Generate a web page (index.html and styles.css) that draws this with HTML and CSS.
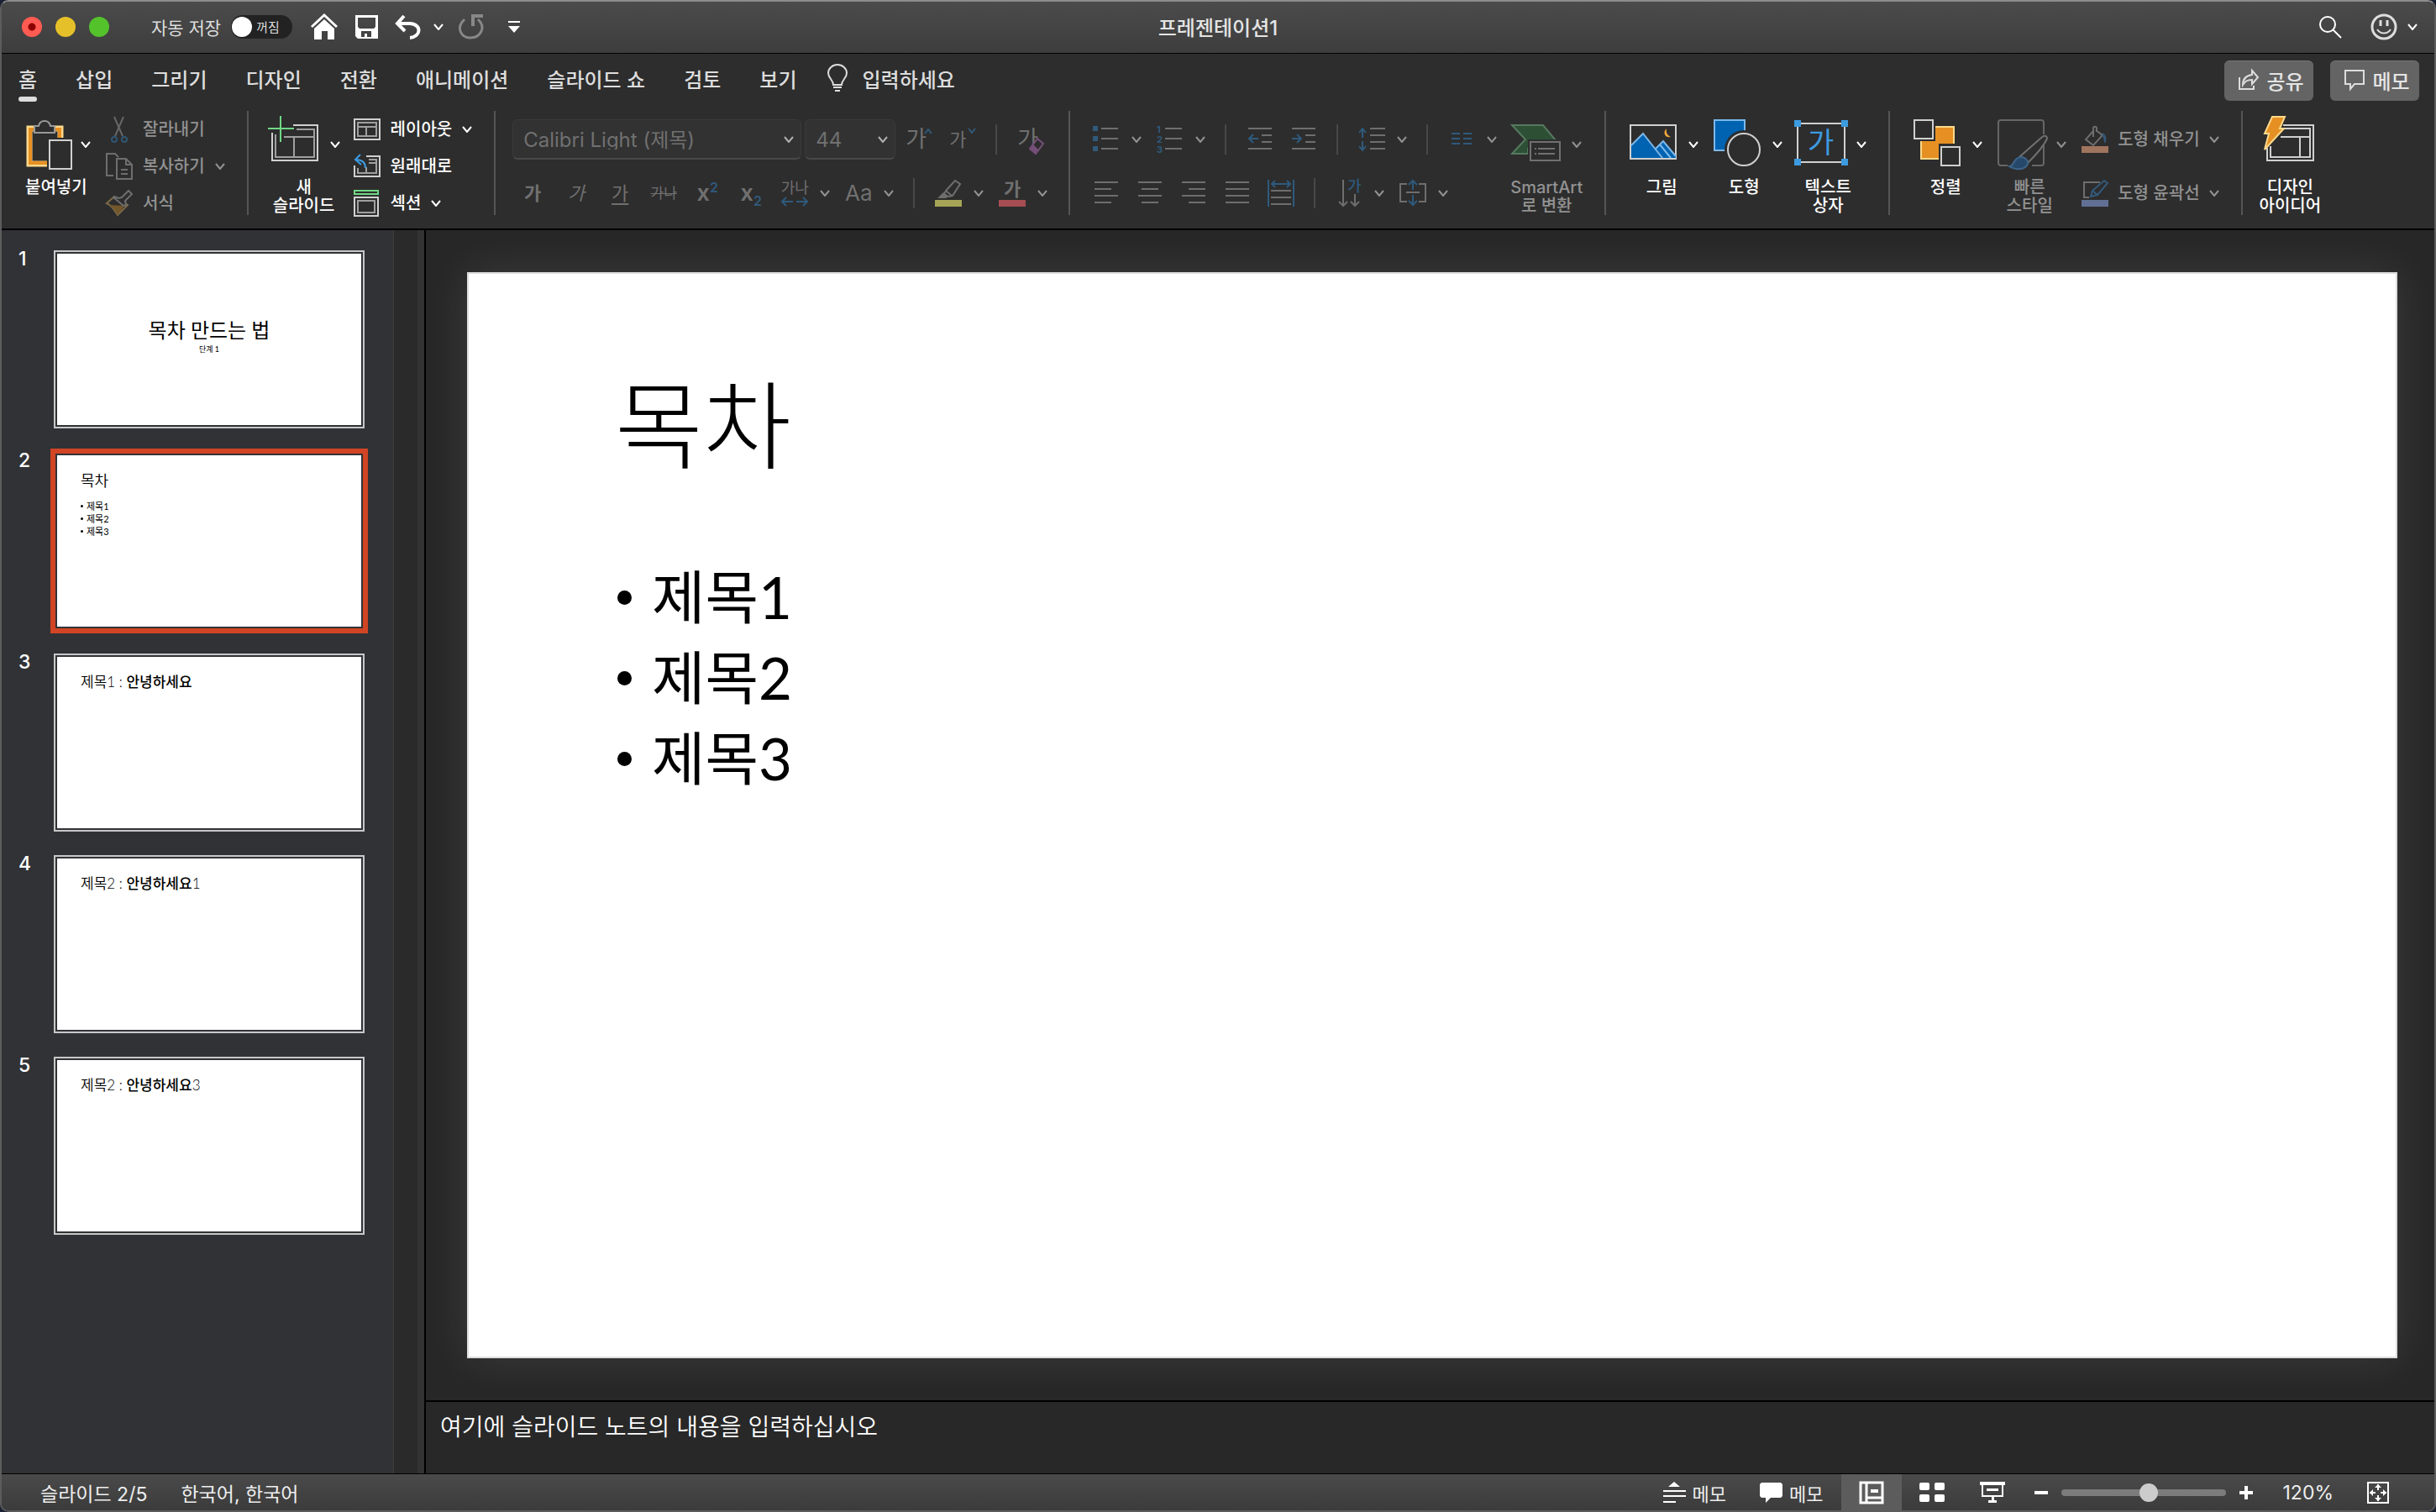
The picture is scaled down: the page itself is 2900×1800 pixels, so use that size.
FILE: index.html
```html
<!DOCTYPE html>
<html lang="ko">
<head>
    <meta charset="utf-8">
    <title>프레젠테이션1</title>
    <link rel="stylesheet" href="styles.css">
</head>
<body>
<svg class="defs" aria-hidden="true">
    <symbol id="chev" viewBox="0 0 12 8"><path d="M1 1l5 6 5-6" fill="none" stroke="currentColor" stroke-width="2"/></symbol>
</svg>
<div class="window">
    <header class="titlebar">
        <div class="title-left">
            <div class="lights">
                <button class="light red" aria-label="닫기"></button>
                <button class="light yellow" aria-label="최소화"></button>
                <button class="light green" aria-label="확대"></button>
            </div>
            <label class="autosave" for="autosave">자동 저장</label>
            <label class="toggle"><input type="checkbox" id="autosave"><span>꺼짐</span></label>
            <div class="quick">
                <button aria-label="홈"><svg width="32" height="32" viewBox="0 0 32 32"><path d="M1 16L16 2l15 14" fill="none" stroke="#fff" stroke-width="3"/><path d="M4 18L16 7l12 11v13h-8V21h-7v10H4z" fill="#fff"/></svg></button>
                <button aria-label="저장"><svg width="28" height="30" viewBox="0 0 28 30"><path fill-rule="evenodd" fill="#fff" d="M1 1h27v28H4l-3-3zM4 4v11l2 2h17l2-2V4zM8 20v7h4v-4h3v4h5v-7z"/></svg></button>
                <button aria-label="실행 취소"><svg width="32" height="30" viewBox="0 0 32 30"><path d="M11 2L3 11l9 9M4 11h14c15 1 13 16 0 17" fill="none" stroke="#fff" stroke-width="4"/></svg></button>
                <button aria-label="실행 취소 옵션"><svg class="chev"><use href="#chev"/></svg></button>
                <button aria-label="다시 실행" disabled><svg width="30" height="32" viewBox="0 0 30 32"><path d="M7 7C-4 17 3 29 14 29s20-12 9-22" fill="none" stroke="#888" stroke-width="3"/><path d="M17 15V3h12" fill="none" stroke="#888" stroke-width="4"/></svg></button>
                <button aria-label="도구 모음 사용자 지정"><svg width="16" height="16" viewBox="0 0 16 16"><path d="M1 1h14v2H1zM1 7h14l-7 8z" fill="#fff"/></svg></button>
            </div>
        </div>
        <h1>프레젠테이션1</h1>
        <div class="title-right">
            <button aria-label="검색"><svg width="28" height="28" viewBox="0 0 28 28"><g fill="none" stroke="#fff" stroke-width="2"><circle cx="11" cy="11" r="9"/><path d="M17 17l10 10"/></g></svg></button>
            <button class="smile" aria-label="피드백"><svg width="32" height="32" viewBox="0 0 32 32"><g fill="none" stroke="#ddd" stroke-width="2"><circle cx="16" cy="16" r="14" stroke-width="3"/><path d="M8 19c4 6 12 6 16 0"/><path d="M12 8v7M20 8v7" stroke-width="3"/></g></svg><svg class="chev"><use href="#chev"/></svg></button>
        </div>
    </header>

    <nav class="tabs">
        <a class="active" href="#home">홈</a>
        <a href="#insert">삽입</a>
        <a href="#draw">그리기</a>
        <a href="#design">디자인</a>
        <a href="#transition">전환</a>
        <a href="#animation">애니메이션</a>
        <a href="#show">슬라이드 쇼</a>
        <a href="#review">검토</a>
        <a href="#view">보기</a>
        <a class="tell" href="#tell"><svg width="24" height="34" viewBox="0 0 24 34"><g fill="none" stroke="#ddd" stroke-width="2"><path d="M7 25c0-6-6-8-6-14a11 10 0 0 1 22 0c0 6-6 8-6 14zM7 28h10M9 32h6"/></g></svg>입력하세요</a>
        <div class="tab-actions">
            <button><svg width="24" height="24" viewBox="0 0 24 24"><g fill="none" stroke="#ddd" stroke-width="2"><path d="M1 9v14h17v-4"/><path d="M5 18c0-7 4-11 11-12V1l7 8-7 8v-5c-5 0-8 1-11 6z"/></g></svg>공유</button>
            <button><svg width="24" height="24" viewBox="0 0 24 24"><path d="M1 1h22v16H12l-5 6v-6H1z" fill="none" stroke="#ddd" stroke-width="2"/></svg>메모</button>
        </div>
    </nav>

    <section class="ribbon">
        <div class="group clipboard">
            <button class="big">
                <span class="pic"><svg width="56" height="64" viewBox="0 0 56 64"><path d="M26 55H5V13H42v11" fill="none" stroke="#fcd98a" stroke-width="7"/><path d="M26 54H6V14H41v10" fill="none" stroke="#e69023" stroke-width="4"/><path d="M11 10h5c1-5 4-6 7-6s6 1 7 6h5v8H11z" fill="#2d2d2d" stroke="#999" stroke-width="2"/><path d="M29 27h26v34H29z" fill="#2d2d2d" stroke="#d0d0d0" stroke-width="2"/></svg><svg class="chev"><use href="#chev"/></svg></span>
                <span>붙여넣기</span>
            </button>
            <div class="stack">
                <button disabled><svg width="32" height="32" viewBox="0 0 32 32"><path d="M10 1l10 23M21 1L11 24" fill="none" stroke="#666" stroke-width="2"/><g fill="none" stroke="#2f5673" stroke-width="2"><circle cx="10" cy="28" r="3"/><circle cx="22" cy="28" r="3"/></g></svg>잘라내기</button>
                <button disabled><svg width="32" height="32" viewBox="0 0 32 32"><g fill="none" stroke="#6e6e6e" stroke-width="2"><path d="M9 27H1V1h10l4 4M13 7h11l7 7v17H13zM24 7v7h7M18 20h8M18 25h8"/></g></svg>복사하기<svg class="chev"><use href="#chev"/></svg></button>
                <button disabled><svg width="32" height="32" viewBox="0 0 32 32"><path d="M9 9L1 16c5 2 9 7 13 14l12-12z" fill="none" stroke="#7c6a49" stroke-width="2"/><path d="M4 18l18 1-8 11c-3-6-6-9-10-12z" fill="#73572c"/><path d="M10 8l5 2 4-1 8-8 4 4-8 8 1 5-3 1L9 9z" fill="#2d2d2d" stroke="#6e6e6e" stroke-width="2"/></svg>서식</button>
            </div>
        </div>

        <div class="group slides">
            <button class="big">
                <span class="pic"><svg width="64" height="64" viewBox="0 0 64 64"><path d="M30 9h29v42H5V18" fill="none" stroke="#d0d0d0" stroke-width="2"/><path d="M34 14h21v33H9V20M19 23h36M31 23v24" fill="none" stroke="#a0a0a0" stroke-width="2"/><path d="M15-2v31M0 13h31" stroke="#6fd885" stroke-width="2"/></svg><svg class="chev"><use href="#chev"/></svg></span>
                <span>새<br>슬라이드</span>
            </button>
            <div class="stack">
                <button><svg width="32" height="32" viewBox="0 0 32 32"><path d="M1 4h30v24H1z" fill="none" stroke="#d0d0d0" stroke-width="2"/><path d="M5 8h22v16H5zM5 13h22M15 13v11" fill="none" stroke="#a0a0a0" stroke-width="2"/></svg>레이아웃<svg class="chev"><use href="#chev"/></svg></button>
                <button><svg width="32" height="32" viewBox="0 0 32 32"><path d="M15 4h16v24H1V15" fill="none" stroke="#d0d0d0" stroke-width="2"/><path d="M18 8h9v16H5v-6M18 12h9M15 17v7" fill="none" stroke="#a0a0a0" stroke-width="2"/><path d="M8 2L2 8l7 6M2 8c8 0 12 3 12 10" fill="none" stroke="#3d9be0" stroke-width="2"/></svg>원래대로</button>
                <button><svg width="32" height="32" viewBox="0 0 32 32"><path d="M1 1h28v4H1z" fill="none" stroke="#6fd885" stroke-width="2"/><path d="M1 9h28v22H1z" fill="none" stroke="#d0d0d0" stroke-width="2"/><path d="M5 13h20v14H5z" fill="none" stroke="#a0a0a0" stroke-width="2"/></svg>섹션<svg class="chev"><use href="#chev"/></svg></button>
            </div>
        </div>

        <div class="group font">
            <div class="rows">
                <div class="row">
                    <label class="combo font-name"><select aria-label="글꼴" disabled><option>Calibri Light (제목)</option></select><svg class="chev"><use href="#chev"/></svg></label>
                    <label class="combo font-size"><select aria-label="글꼴 크기" disabled><option>44</option></select><svg class="chev"><use href="#chev"/></svg></label>
                    <div class="set sizes">
                        <button class="glyph" disabled aria-label="글꼴 크기 크게"><span class="large">가</span><svg width="10" height="8" viewBox="0 0 10 8"><path d="M1 7l4-5 4 5" fill="none" stroke="#2f5a7c" stroke-width="2"/></svg></button>
                        <button class="glyph" disabled aria-label="글꼴 크기 작게"><span>가</span><svg width="10" height="8" viewBox="0 0 10 8"><path d="M1 1l4 5 4-5" fill="none" stroke="#2f5a7c" stroke-width="2"/></svg></button>
                    </div>
                    <i class="sep"></i>
                    <button class="glyph clear" disabled aria-label="서식 지우기"><span class="large">가</span><svg width="18" height="20" viewBox="0 0 18 20"><path d="M10 1l7 6-9 12-7-6z" fill="#2d2d2d" stroke="#75507a" stroke-width="2"/><path d="M5 8l6 6-3 4-6-5z" fill="#75507a"/></svg></button>
                </div>
                <div class="row second styles">
                    <div class="set">
                        <button class="glyph" disabled><b>가</b></button>
                        <button class="glyph" disabled><em>가</em></button>
                        <button class="glyph" disabled><u>가</u></button>
                        <button class="glyph tiny" disabled><s>가나</s></button>
                        <button class="glyph x" disabled><span>x<sup>2</sup></span></button>
                        <button class="glyph x" disabled><span>x<sub>2</sub></span></button>
                    </div>
                    <div class="set pairs">
                        <button class="drop" disabled><span class="glyph spacing"><span>가나</span><svg width="32" height="12" viewBox="0 0 32 12"><path d="M14 6H2M6 1L1 6l5 5M18 6h12M26 1l5 5-5 5" fill="none" stroke="#2f5a7c" stroke-width="2"/></svg></span><svg class="chev"><use href="#chev"/></svg></button>
                        <button class="drop" disabled><span class="glyph aa">Aa</span><svg class="chev"><use href="#chev"/></svg></button>
                    </div>
                    <i class="sep"></i>
                    <div class="set pairs">
                        <button class="drop" disabled aria-label="강조 색"><svg width="32" height="32" viewBox="0 0 32 32"><path d="M13 13L24 1l6 4-9 14-5 1-5-3zM13 13l7 6" fill="none" stroke="#6e6e6e" stroke-width="2"/><path d="M10 15l6 5-3 2H3z" fill="#6e6e6e"/><path d="M0 24h32v8H0z" fill="#a5a457"/></svg><svg class="chev"><use href="#chev"/></svg></button>
                        <button class="drop" disabled aria-label="글꼴 색"><span class="glyph color"><b>가</b></span><svg class="chev"><use href="#chev"/></svg></button>
                    </div>
                </div>
            </div>
        </div>

        <div class="group paragraph">
            <div class="rows">
                <div class="row">
                    <div class="set pairs">
                        <button class="drop" disabled aria-label="글머리 기호"><svg width="32" height="32" viewBox="0 0 32 32"><path d="M0 0h6v6H0zM0 12h6v6H0zM0 24h6v6H0z" fill="#2f5a7c"/><path d="M10 3h20M10 15h20M10 27h20" stroke="#6e6e6e" stroke-width="2"/></svg><svg class="chev"><use href="#chev"/></svg></button>
                        <button class="drop" disabled aria-label="번호 매기기"><svg width="32" height="32" viewBox="0 0 32 32"><g class="nums"><text x="0" y="8">1</text><text x="0" y="20">2</text><text x="0" y="32">3</text></g><path d="M10 3h20M10 15h20M10 27h20" stroke="#6e6e6e" stroke-width="2"/></svg><svg class="chev"><use href="#chev"/></svg></button>
                    </div>
                    <i class="sep"></i>
                    <div class="set">
                        <button disabled aria-label="내어쓰기"><svg width="32" height="32" viewBox="0 0 32 32"><path d="M2 3h28M18 11h12M18 19h12M2 27h28" stroke="#6e6e6e" stroke-width="2"/><path d="M14 15H3M8 10l-5 5 5 5" fill="none" stroke="#2f5a7c" stroke-width="2"/></svg></button>
                        <button disabled aria-label="들여쓰기"><svg width="32" height="32" viewBox="0 0 32 32"><path d="M2 3h28M18 11h12M18 19h12M2 27h28" stroke="#6e6e6e" stroke-width="2"/><path d="M2 15h11M8 10l5 5-5 5" fill="none" stroke="#2f5a7c" stroke-width="2"/></svg></button>
                    </div>
                    <i class="sep"></i>
                    <button class="drop" disabled aria-label="줄 간격"><svg width="32" height="32" viewBox="0 0 32 32"><path d="M14 3h18M14 11h18M14 19h18M14 27h18" stroke="#6e6e6e" stroke-width="2"/><path d="M5 14V3M1 8l4-5 4 5M5 18v10M1 24l4 5 4-5" fill="none" stroke="#2f5a7c" stroke-width="2"/></svg><svg class="chev"><use href="#chev"/></svg></button>
                    <i class="sep"></i>
                    <button class="drop" disabled aria-label="열"><svg width="32" height="32" viewBox="0 0 32 32"><path d="M4 9h10M18 9h10M4 15h10M18 15h10M4 21h10M18 21h10" stroke="#2f5a7c" stroke-width="2"/></svg><svg class="chev"><use href="#chev"/></svg></button>
                </div>
                <div class="row second">
                    <div class="set">
                        <button disabled aria-label="왼쪽 맞춤"><svg width="32" height="32" viewBox="0 0 32 32"><path d="M2 3h28M2 11h20M2 19h28M2 27h20" stroke="#6e6e6e" stroke-width="2"/></svg></button>
                        <button disabled aria-label="가운데 맞춤"><svg width="32" height="32" viewBox="0 0 32 32"><path d="M2 3h28M6 11h20M2 19h28M6 27h20" stroke="#6e6e6e" stroke-width="2"/></svg></button>
                        <button disabled aria-label="오른쪽 맞춤"><svg width="32" height="32" viewBox="0 0 32 32"><path d="M2 3h28M10 11h20M2 19h28M10 27h20" stroke="#6e6e6e" stroke-width="2"/></svg></button>
                        <button disabled aria-label="양쪽 맞춤"><svg width="32" height="32" viewBox="0 0 32 32"><path d="M2 3h28M2 11h28M2 19h28M2 27h28" stroke="#6e6e6e" stroke-width="2"/></svg></button>
                        <button disabled aria-label="균등 분할"><svg width="32" height="32" viewBox="0 0 32 32"><path d="M4 13h24M4 21h24M4 29h24" stroke="#6e6e6e" stroke-width="2"/><path d="M1 0v32M31 0v32M5 5h22M9 1L5 5l4 4M23 1l4 4-4 4" fill="none" stroke="#2f5a7c" stroke-width="2"/></svg></button>
                    </div>
                    <i class="sep"></i>
                    <div class="set pairs">
                        <button class="drop" disabled aria-label="텍스트 방향"><svg width="32" height="32" viewBox="0 0 32 32"><path d="M9 0v30M4 26l5 5 5-5M23 17v13M18 26l5 5 5-5" fill="none" stroke="#6e6e6e" stroke-width="2"/><text class="ga" x="14" y="14">가</text></svg><svg class="chev"><use href="#chev"/></svg></button>
                        <button class="drop" disabled aria-label="텍스트 맞춤"><svg width="32" height="32" viewBox="0 0 32 32"><path d="M9 5H1v21h8M23 5h8v21h-8M8 15h16" fill="none" stroke="#6e6e6e" stroke-width="2"/><path d="M16 12V2M11 6l5-5 5 5M16 18v10M11 25l5 5 5-5" fill="none" stroke="#2f5a7c" stroke-width="2"/></svg><svg class="chev"><use href="#chev"/></svg></button>
                    </div>
                </div>
            </div>
            <button class="big" disabled>
                <span class="pic"><svg width="62" height="64" viewBox="0 0 62 64"><path d="M1 9h37l15 18v10H20v6H1l16-17z" fill="#2d5035" stroke="#56795f" stroke-width="2"/><path d="M20 26h42v30H20z" fill="#2d2d2d"/><path d="M23 29h35v22H23zM32 37h20M32 43h20M28 37h2M28 43h2" fill="none" stroke="#707070" stroke-width="2"/></svg><svg class="chev"><use href="#chev"/></svg></span>
                <span>SmartArt<br>로 변환</span>
            </button>
        </div>

        <div class="group insert">
            <button class="big">
                <span class="pic"><svg width="60" height="64" viewBox="0 0 60 64"><path d="M1 9h54v40H1z" fill="none" stroke="#d0d0d0" stroke-width="2"/><path d="M2 33l14-14 24 29H2z" fill="#0063b1"/><path d="M31 37l9-9 15 18v2H40z" fill="#0063b1"/><path d="M2 33l14-14 23 29M31 37l9-9 15 18M36 32l13 16" fill="none" stroke="#7cb8ea" stroke-width="2"/><path d="M44 13c-5 4-2 12 5 10-4-2-6-5-5-10z" fill="#f0a63c"/></svg><svg class="chev"><use href="#chev"/></svg></span>
                <span>그림</span>
            </button>
            <button class="big">
                <span class="pic"><svg width="64" height="64" viewBox="0 0 64 64"><path d="M5 3h36v36H5z" fill="#0063b1" stroke="#7cb8ea" stroke-width="2"/><circle cx="40" cy="38" r="23" fill="#2d2d2d"/><circle cx="40" cy="38" r="19" fill="#2d2d2d" stroke="#d0d0d0" stroke-width="2"/></svg><svg class="chev"><use href="#chev"/></svg></span>
                <span>도형</span>
            </button>
            <button class="big">
                <span class="pic"><svg width="64" height="64" viewBox="0 0 64 64"><path d="M4 7h56v46H4z" fill="none" stroke="#d0d0d0" stroke-width="2"/><path d="M0 3h8v8H0zM56 3h8v8h-8zM0 49h8v8H0zM56 49h8v8h-8z" fill="#3d9be0"/><text class="ga-big" x="16" y="42">가</text></svg><svg class="chev"><use href="#chev"/></svg></span>
                <span>텍스트<br>상자</span>
            </button>
        </div>

        <div class="group drawing">
            <button class="big">
                <span class="pic"><svg width="60" height="64" viewBox="0 0 60 64"><path d="M9 11h39v38H9z" fill="#e69023" stroke="#fcd98a" stroke-width="2"/><path d="M0 0h26v28H0zM30 31h30v30H30z" fill="#2d2d2d"/><path d="M1 3h22v22H1zM33 35h22v22H33z" fill="none" stroke="#d0d0d0" stroke-width="2"/></svg><svg class="chev"><use href="#chev"/></svg></span>
                <span>정렬</span>
            </button>
            <button class="big" disabled>
                <span class="pic"><svg width="60" height="64" viewBox="0 0 60 64"><path d="M12 57H4a3 3 0 0 1-3-3V6a3 3 0 0 1 3-3h48a3 3 0 0 1 3 3v14M55 33v21a3 3 0 0 1-3 3H41" fill="none" stroke="#666" stroke-width="2"/><path d="M27 46L52 24c4-4 7-2 7 1-4 9-13 19-22 28z" fill="#2d2d2d" stroke="#707070" stroke-width="2"/><path d="M14 58c6 0 5-11 14-11 6 0 10 6 7 10-5 6-15 5-21 1z" fill="#26496a" stroke="#3d658a" stroke-width="2"/></svg><svg class="chev"><use href="#chev"/></svg></span>
                <span>빠른<br>스타일</span>
            </button>
            <div class="rows shape">
                <button class="row" disabled><svg width="32" height="32" viewBox="0 0 32 32"><path d="M14 13V3c0-3 4-3 4 0v4M14 6l-9 10 9 7 11-12-8-6" fill="none" stroke="#6e6e6e" stroke-width="2"/><path d="M25 8c5 3 5 8 3 13-2-3-1-6-3-9z" fill="#34597a"/><path d="M0 24h32v8H0z" fill="#a0745e"/></svg>도형 채우기<svg class="chev"><use href="#chev"/></svg></button>
                <button class="row second" disabled><svg width="32" height="32" viewBox="0 0 32 32"><path d="M22 3H3v18h6" fill="none" stroke="#6e6e6e" stroke-width="2"/><path d="M11 20l2-7L27 1l4 3-12 14zM13 13l6 5" fill="none" stroke="#34597a" stroke-width="2"/><path d="M0 24h32v8H0z" fill="#626f94"/></svg>도형 윤곽선<svg class="chev"><use href="#chev"/></svg></button>
            </div>
        </div>

        <div class="group designer">
            <button class="big">
                <span class="pic"><svg width="62" height="64" viewBox="0 0 62 64"><path d="M23 9h36v42H4V36M8 34v13h47V13H22M20 23h35M43 23v24" fill="none" stroke="#d0d0d0" stroke-width="2"/><path d="M10-1h15l-6 14h5L1 38l5-19H1z" fill="#e69023" stroke="#fcd98a" stroke-width="2"/></svg></span>
                <span>디자인<br>아이디어</span>
            </button>
        </div>
    </section>

    <main class="workspace">
        <aside class="sidebar">
            <ol class="thumbs">
                <li><span class="num">1</span><div class="thumb cover"><h3>목차 만드는 법</h3><p>단계 1</p></div></li>
                <li><span class="num">2</span><div class="thumb agenda selected"><h3>목차</h3><ul><li>제목1</li><li>제목2</li><li>제목3</li></ul></div></li>
                <li><span class="num">3</span><div class="thumb"><h4>제목1 : <b>안녕하세요</b></h4></div></li>
                <li><span class="num">4</span><div class="thumb"><h4>제목2 : <b>안녕하세요</b>1</h4></div></li>
                <li><span class="num">5</span><div class="thumb"><h4>제목2 : <b>안녕하세요</b>3</h4></div></li>
            </ol>
        </aside>
        <div class="gutter"></div>
        <section class="editor">
            <div class="canvas">
                <article class="slide">
                    <h2>목차</h2>
                    <ul>
                        <li>제목1</li>
                        <li>제목2</li>
                        <li>제목3</li>
                    </ul>
                </article>
            </div>
            <textarea class="notes" aria-label="슬라이드 노트">여기에 슬라이드 노트의 내용을 입력하십시오</textarea>
        </section>
    </main>

    <footer class="statusbar">
        <span>슬라이드 2/5</span>
        <span>한국어, 한국어</span>
        <div class="status-right">
            <button class="text"><svg width="27" height="26" viewBox="0 0 27 26"><path d="M13 0l7 6H6zM0 10h27v2H0zM0 16h27v2H0zM0 23h15v2H0z" fill="#fff"/></svg>메모</button>
            <button class="text"><svg width="27" height="26" viewBox="0 0 27 26"><path d="M2 1h23l2 2v14l-2 2H13l-6 6v-6H2l-2-2V3z" fill="#fff"/></svg>메모</button>
            <button class="view active" aria-label="기본"><svg width="28" height="26" viewBox="0 0 28 26"><path d="M1 1h26v24H1zM8 1v24M8 19h19" fill="none" stroke="#fff" stroke-width="3"/><path d="M13 9h9v4h-9z" fill="#fff"/></svg></button>
            <button class="view" aria-label="여러 슬라이드"><svg width="30" height="24" viewBox="0 0 30 24"><g fill="#fff"><rect width="12" height="9" rx="2"/><rect x="18" width="12" height="9" rx="2"/><rect y="14" width="12" height="9" rx="2"/><rect x="18" y="14" width="12" height="9" rx="2"/></g></svg></button>
            <button class="view" aria-label="슬라이드 쇼"><svg width="30" height="26" viewBox="0 0 30 26"><path d="M0 0h30v4H0zM14 17h3v6h-3zM10 22h10v3H10zM8 8h14v3H8z" fill="#fff"/><path d="M3 3v14h24V3" fill="none" stroke="#fff" stroke-width="2"/></svg></button>
            <button class="zoom-out" aria-label="축소"><svg width="16" height="16" viewBox="0 0 16 16"><path d="M0 6h16v4H0z" fill="#fff"/></svg></button>
            <input type="range" class="zoom" aria-label="확대/축소" min="0" max="100" value="54">
            <button aria-label="확대"><svg width="16" height="16" viewBox="0 0 16 16"><path d="M0 6h16v4H0zM6 0h4v16H6z" fill="#fff"/></svg></button>
            <span class="percent">120%</span>
            <button aria-label="창에 맞춤"><svg width="26" height="26" viewBox="0 0 26 26"><path d="M1 1h24v24H1z" fill="none" stroke="#fff" stroke-width="2"/><path d="M13 3v7M13 16v7M3 13h7M16 13h7" stroke="#fff" stroke-width="2"/><path d="M9 7l4-4 4 4zM9 19l4 4 4-4zM7 9l-4 4 4 4zM19 9l4 4-4 4z" fill="#fff"/></svg></button>
        </div>
    </footer>
</div>
</body>
</html>
```
FILE: styles.css
```css
* {
    box-sizing: border-box;
}
body {
    margin: 0;
    height: 100vh;
    background-color: #1a2233;
    color: #fff;
    font-family: "Inter", "Noto Sans CJK KR", sans-serif;
}
svg {
    display: block;
    flex-shrink: 0;
    overflow: visible;
}
.defs {
    position: absolute;
    width: 0;
    height: 0;
}
.chev {
    width: 12px;
    height: 8px;
}
button {
    display: flex;
    align-items: center;
    padding: 0;
    border: none;
    background: none;
    color: inherit;
    font: inherit;
    cursor: pointer;
}
button:disabled {
    color: #929292;
    cursor: default;
}
h1, h2, h3, h4, p, ul, ol {
    margin: 0;
    padding: 0;
    list-style: none;
}
.window {
    display: flex;
    flex-direction: column;
    height: 100%;
    border: 2px solid #5c5c5c;
    border-top-color: #8c8c8c;
    border-radius: 10px;
    overflow: hidden;
    background-color: #2d2d2d;
}

/* title bar */
.titlebar {
    display: grid;
    grid-template-columns: 1fr auto 1fr;
    align-items: center;
    height: 62px;
    padding-bottom: 2px;
    background: linear-gradient(#4b4b4b, #3d3d3d);
    border-bottom: 1px solid #000;
}
.titlebar h1 {
    font-size: 24px;
    font-weight: 500;
    color: #e4e4e4;
}
.title-left, .lights, .quick, .title-right {
    display: flex;
    align-items: center;
}
.title-left {
    padding-left: 24px;
}
.lights {
    gap: 16px;
    margin-right: 50px;
}
.light {
    justify-content: center;
    width: 24px;
    height: 24px;
    border-radius: 50%;
}
.red {
    background: radial-gradient(circle, #8c0000 4px, #ff5b52 5px);
}
.yellow {
    background-color: #e6c029;
}
.green {
    background-color: #53c22b;
}
.autosave {
    margin-right: 12px;
    font-size: 21px;
    color: #ddd;
}
.toggle {
    display: flex;
    align-items: center;
    gap: 5px;
    width: 73px;
    height: 28px;
    margin-right: 22px;
    border-radius: 14px;
    background-color: #222;
    font-size: 15px;
    color: #ddd;
}
.toggle input {
    appearance: none;
    width: 24px;
    height: 24px;
    margin: 0 0 0 1px;
    border-radius: 50%;
    background-color: #fff;
}
.quick {
    gap: 20px;
}
.quick button:nth-child(4) {
    margin: 0 -2px 0 -6px;
}
.quick button:last-child {
    margin-left: 8px;
}
.title-right {
    justify-content: flex-end;
    gap: 34px;
    padding-right: 20px;
}
.smile {
    gap: 12px;
}

/* tabs */
.tabs {
    display: flex;
    align-items: center;
    gap: 46px;
    height: 64px;
    padding: 0 18px 0 20px;
    font-size: 24px;
    font-weight: 500;
}
.tabs a {
    position: relative;
    padding-bottom: 6px;
    color: #ddd;
    text-decoration: none;
}
.tabs .active::after {
    content: "";
    position: absolute;
    left: 0;
    right: 0;
    bottom: -4px;
    height: 6px;
    border-radius: 3px;
    background-color: #ddd;
}
.tabs .tell {
    display: flex;
    align-items: center;
    gap: 18px;
    margin-left: -10px;
}
.tab-actions {
    display: flex;
    gap: 20px;
    margin-left: auto;
}
.tab-actions button {
    justify-content: center;
    gap: 9px;
    width: 106px;
    height: 48px;
    padding: 0 0 3px 6px;
    border-radius: 6px;
    background-color: #646464;
    border-top: 1px solid #757575;
    color: #e4e4e4;
}

/* ribbon */
.ribbon {
    display: flex;
    padding: 4px 0 16px;
    border-bottom: 2px solid #000;
    font-size: 20px;
    line-height: 22px;
    font-weight: 500;
}
.group {
    display: flex;
    align-items: flex-start;
    gap: 16px;
    height: 124px;
    padding: 0 26px 0 28px;
    border-right: 2px solid #555;
}
.group:last-child {
    border: none;
}
.clipboard {
    padding-left: 28px;
}
.clipboard .stack {
    padding-left: 2px;
}
.slides {
    padding-left: 23px;
}
.font {
    padding: 0 25px 0 20px;
}
.paragraph {
    padding-left: 27px;
}
.insert {
    gap: 14px;
}
.drawing {
    gap: 18px;
}
.designer {
    padding-left: 20px;
}
.big {
    flex-direction: column;
    white-space: nowrap;
}
.clipboard .big {
    align-items: flex-start;
}
.insert .big > span:last-child, .drawing .big > span:last-child {
    padding-right: 6px;
}
.pic {
    display: flex;
    align-items: center;
    gap: 10px;
    height: 80px;
}
.stack {
    display: flex;
    flex-direction: column;
    gap: 12px;
    padding-top: 6px;
}
.stack button {
    gap: 12px;
    height: 32px;
    white-space: nowrap;
}
.rows {
    display: flex;
    flex-direction: column;
    align-items: flex-start;
    gap: 22px;
    padding-top: 10px;
}
.row {
    display: flex;
    align-items: center;
    height: 48px;
    white-space: nowrap;
}
.second {
    height: 36px;
}
.styles {
    padding-left: 8px;
}
.set {
    display: flex;
    align-items: center;
    gap: 20px;
}
.set + .set {
    margin-left: 20px;
}
.pairs {
    gap: 18px;
}
.drop {
    gap: 14px;
}
.sep {
    width: 2px;
    height: 36px;
    margin: 0 24px 0 23px;
    background-color: #484848;
}
.shape button {
    gap: 11px;
}
.combo {
    position: relative;
}
.combo select {
    appearance: none;
    width: 100%;
    height: 48px;
    padding: 2px 12px 0;
    border: 1px solid #3a3a3a;
    border-bottom: 2px solid #484848;
    border-radius: 6px;
    background-color: #323232;
    color: #707070;
    opacity: 1;
    font: inherit;
    font-size: 24px;
    font-weight: 400;
}
.combo .chev {
    position: absolute;
    right: 9px;
    top: 20px;
    color: #b0b0b0;
}
.font-name {
    width: 344px;
    margin-right: 4px;
}
.font-size {
    width: 108px;
}
.sizes {
    margin-left: 12px;
}

/* text-like icons of the font group */
.glyph {
    position: relative;
    display: flex;
    justify-content: center;
    width: 32px;
    height: 32px;
    font-size: 22px;
    line-height: 32px;
    font-weight: 400;
    color: #707070;
}
.glyph:disabled {
    color: #707070;
}
.glyph b {
    font-weight: 700;
}
.glyph u {
    text-underline-offset: 4px;
}
.sizes .glyph, .clear {
    justify-content: flex-start;
}
.sizes svg {
    position: absolute;
    right: 0;
    top: 2px;
}
.large {
    font-size: 27px;
}
.clear svg {
    position: absolute;
    right: 0;
    bottom: -2px;
}
.tiny {
    font-size: 17px;
}
.x {
    font-size: 27px;
    font-weight: 600;
}
.x sup, .x sub {
    font-size: 16px;
    line-height: 0;
    color: #2f5a7c;
}
.spacing {
    flex-direction: column;
    align-items: center;
    font-size: 18px;
    line-height: 20px;
}
.aa {
    font-size: 26px;
}
.color {
    line-height: 22px;
    border-bottom: 8px solid #a54d52;
}
.nums text {
    font-size: 11px;
    font-weight: 700;
    fill: #2f5a7c;
}
.ga {
    font-size: 18px;
    fill: #2f5a7c;
}
.ga-big {
    font-size: 34px;
    font-weight: 400;
    fill: #3d9be0;
}

/* slide list and editor */
.workspace {
    display: flex;
    flex: 1;
    min-height: 0;
}
.sidebar {
    width: 466px;
    padding: 20px 0 0 20px;
    background-color: #313236;
}
.thumbs {
    display: flex;
    flex-direction: column;
    gap: 20px;
}
.thumbs > li {
    display: flex;
    height: 220px;
}
.num {
    width: 46px;
    font-size: 23px;
    font-weight: 500;
    line-height: 28px;
}
.thumb {
    width: 362px;
    height: 204px;
    margin-top: 8px;
    padding: 14px 28px;
    background-color: #fff;
    box-shadow: 0 0 0 2px #313236, 0 0 0 4px #c8c8c8;
    color: #000;
    font-family: "Lato", "Noto Sans CJK KR", sans-serif;
}
.thumb.selected {
    box-shadow: 0 0 0 2px #313236, 0 0 0 8px #d14424;
}
.thumb h3 {
    font-size: 18px;
    font-weight: 350;
    line-height: 32px;
}
.thumb h4 {
    font-size: 17px;
    font-weight: 350;
    line-height: 32px;
}
.thumb b {
    font-weight: 500;
}
.thumb.cover {
    padding-top: 74px;
    text-align: center;
}
.cover h3 {
    font-size: 24px;
    font-weight: 400;
    line-height: 34px;
}
.cover p {
    font-size: 9px;
    line-height: 12px;
}
.agenda ul {
    margin-top: 7px;
    font-size: 11px;
    line-height: 15px;
}
.agenda li {
    display: flex;
    align-items: center;
    gap: 4px;
}
.agenda li::before {
    content: "";
    width: 3px;
    height: 3px;
    border-radius: 50%;
    background-color: #000;
}
.gutter {
    width: 39px;
    border-left: 1px solid #404040;
    border-right: 2px solid #000;
    background: linear-gradient(90deg, #2a2a2a 28px, #333 28px);
}
.editor {
    display: flex;
    flex: 1;
    flex-direction: column;
}
.canvas {
    display: flex;
    flex: 1;
    padding: 50px 44px 50px 49px;
    background-color: #272727;
}
.slide {
    flex: 1;
    padding: 119px 174px;
    border: 2px solid #ddd;
    background-color: #fff;
    box-shadow: 0 0 50px rgba(255, 255, 255, 0.1);
    color: #000;
    font-family: "Lato", "Noto Sans CJK KR", sans-serif;
}
.slide h2 {
    font-size: 114px;
    font-weight: 300;
    line-height: 120px;
}
.slide ul {
    margin-top: 98px;
    padding-left: 3px;
    font-size: 69px;
    line-height: 96px;
}
.slide li {
    display: flex;
    align-items: center;
    gap: 24px;
}
.slide li::before {
    content: "";
    width: 17px;
    height: 17px;
    border-radius: 50%;
    background-color: #000;
}
.notes {
    height: 87px;
    padding: 10px 17px;
    border: none;
    border-top: 2px solid #000;
    background-color: #282828;
    color: #fff;
    font: 28px/40px "Inter", "Noto Sans CJK KR", sans-serif;
    font-weight: 350;
    resize: none;
    outline: none;
}

/* status bar */
.statusbar {
    display: flex;
    align-items: center;
    gap: 40px;
    height: 44px;
    padding-left: 46px;
    border-top: 1px solid #000;
    background: linear-gradient(#4a4a4a, #3b3b3b);
    font-size: 23px;
    color: #eee;
}
.status-right {
    display: flex;
    align-items: center;
    margin-left: auto;
    padding-right: 54px;
}
.text {
    gap: 8px;
    margin-right: 40px;
    font-size: 22px;
}
.text + .view {
    margin-left: -19px;
}
.view {
    justify-content: center;
    width: 72px;
    height: 43px;
}
.view.active {
    background-color: #5c5c5c;
}
.zoom-out {
    margin-left: 14px;
}
.zoom {
    appearance: none;
    width: 196px;
    height: 8px;
    margin: 0 16px;
    border-radius: 4px;
    background-color: #7c7c7c;
}
.zoom::-webkit-slider-thumb {
    appearance: none;
    width: 22px;
    height: 22px;
    border-radius: 50%;
    background-color: #ccc;
}
.percent {
    margin: 0 40px 0 36px;
}
```
